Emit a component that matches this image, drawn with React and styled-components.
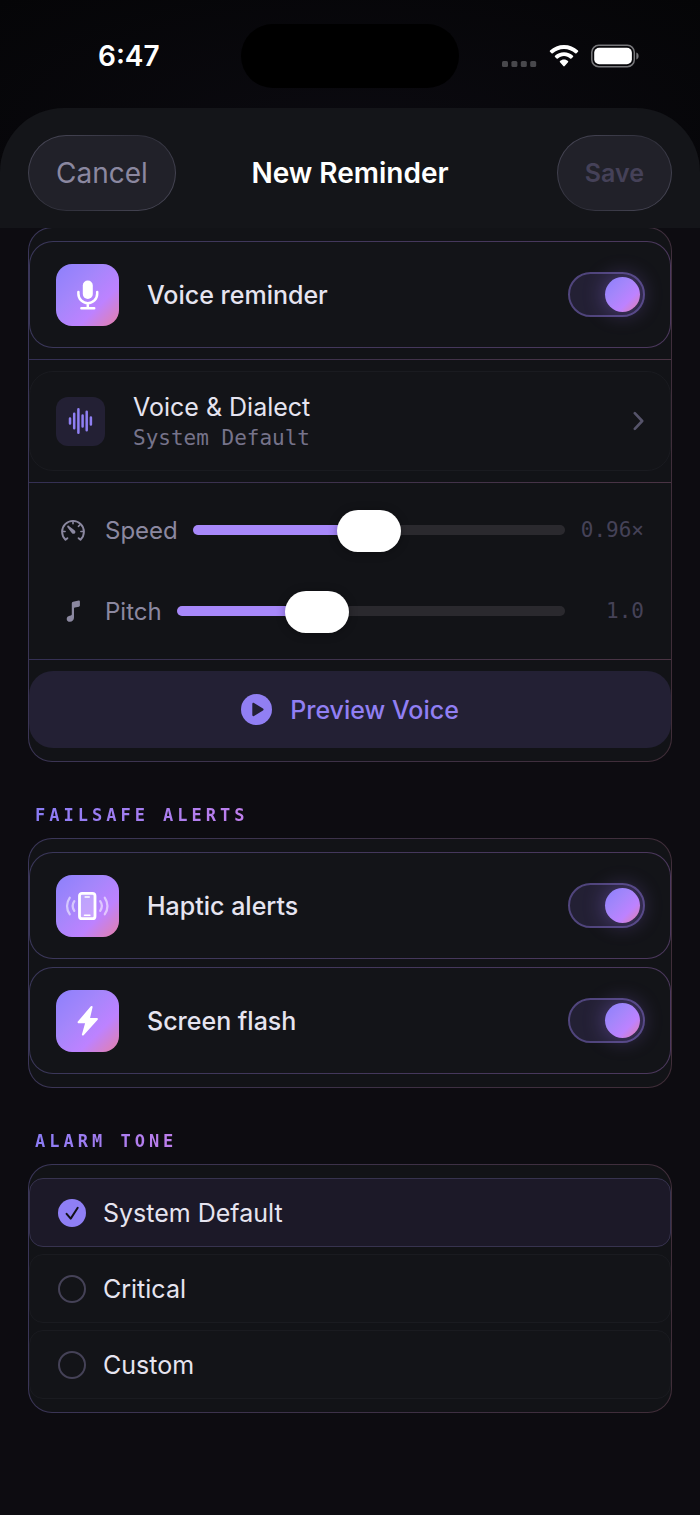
import { useState } from 'react'
import styled, { createGlobalStyle, css } from 'styled-components'

const GlobalStyle = createGlobalStyle`
  *, *::before, *::after {
    box-sizing: border-box;
  }

  body {
    margin: 0;
    background: #0d0c11;
    color: #e6e4f0;
    font-family: Inter, "Liberation Sans", sans-serif;
    -webkit-font-smoothing: antialiased;
  }

  button, input {
    font: inherit;
    color: inherit;
    margin: 0;
  }
`

const mono = '"DejaVu Sans Mono", monospace'
const accentGradient = 'linear-gradient(135deg, #8c80fb 0%, #a586fb 38%, #bd82ff 68%, #e57fa8 100%)'

const gradientBorder = (fill, from, to) => css`
  border: 1px solid transparent;
  background:
    linear-gradient(${fill}, ${fill}) padding-box,
    linear-gradient(100deg, ${from}, ${to}) border-box;
`

const Page = styled.div`
  min-height: 100vh;
  background: #0d0c11;
`

const Top = styled.div`
  position: relative;
  background: radial-gradient(ellipse at 50% 60%, #0b0a10, #050507);
`

const StatusBar = styled.div`
  display: grid;
  grid-template-columns: 1fr 218px 1fr;
  align-items: center;
  height: 108px;
  padding: 4px 61px 0;

  .island {
    height: 64px;
    border-radius: 32px;
    background: #000;
  }
`

const Clock = styled.span`
  padding-left: 37px;
  font-size: 28px;
  font-weight: 600;
  color: #fff;
`

const StatusIcons = styled.div`
  display: flex;
  align-items: center;
  justify-content: flex-end;
  gap: 12px;
`

const SheetHeader = styled.header`
  display: grid;
  grid-template-columns: 1fr auto 1fr;
  align-items: center;
  padding: 27px 28px 17px;
  border-radius: 64px 64px 0 0;
  background: #141519;

  h1 {
    margin: 0;
    font-size: 28px;
    font-weight: 600;
    color: #fff;
  }
`

const PillButton = styled.button`
  height: 76px;
  padding: 0 27px;
  border: 1px solid transparent;
  border-radius: 38px;
  background:
    linear-gradient(#212129, #212129) padding-box,
    linear-gradient(135deg, #4c4b5b, #2f2f3a 50%, #4c4b5b) border-box;
  font-size: 28px;
  color: #8b88a0;
  justify-self: start;

  &:disabled {
    justify-self: end;
    font-size: 25px;
    font-weight: 600;
    color: #454158;
  }
`

const Form = styled.main`
  margin-top: -1px;
  padding: 0 28px 60px;
`

const SectionTitle = styled.h2`
  width: fit-content;
  margin: 41px 0 11px 7px;
  font-family: ${mono};
  font-size: 17px;
  font-weight: 700;
  line-height: 24px;
  letter-spacing: 4px;
  background: linear-gradient(90deg, #8a7cf5, #c07fec);
  background-clip: text;
  color: transparent;
`

const Card = styled.section`
  display: flex;
  flex-direction: column;
  gap: ${props => props.$gap || 0}px;
  padding: 13px 0;
  border-radius: 24px;
  ${gradientBorder('#121317', '#3a3659', '#402d38')}
`

const Divider = styled.hr`
  width: 100%;
  height: 1px;
  margin: 11px 0;
  border: 0;
  background: linear-gradient(90deg, #343054, #4a3444);
`

const ToggleRow = styled.label`
  display: flex;
  align-items: center;
  gap: 28px;
  height: 107px;
  padding: 0 25px 0 26px;
  border-radius: 24px;
  font-size: 25px;
  font-weight: 500;
  ${gradientBorder('#131418', '#3a375a', '#4c385d')}

  span {
    flex: 1;
  }
`

const Tile = styled.div`
  display: grid;
  place-items: center;
  flex: none;
  width: ${props => (props.$small ? 49 : 63)}px;
  height: ${props => (props.$small ? 49 : 62)}px;
  border-radius: ${props => (props.$small ? 12 : 16)}px;
  background: ${props => (props.$small ? '#232034' : accentGradient)};
  color: ${props => (props.$small ? '#8f7ff2' : '#fff')};
`

const Switch = styled.input`
  appearance: none;
  flex: none;
  display: flex;
  align-items: center;
  width: 77px;
  height: 45px;
  padding: 0 3px;
  border: 2px solid #2c2a3c;
  border-radius: 23px;
  background: #232034;

  &::before {
    content: "";
    width: 35px;
    height: 35px;
    border-radius: 50%;
    background: #5a566e;
  }

  &:checked {
    justify-content: flex-end;
    border-color: #50457c;
  }

  &:checked::before {
    background: ${accentGradient};
    box-shadow: 0 0 22px rgba(160, 120, 255, 0.4);
  }
`

const LinkRow = styled.button`
  display: flex;
  align-items: center;
  gap: 28px;
  width: 100%;
  height: 100px;
  padding: 0 26px;
  border: 1px solid #1a1b20;
  border-radius: 24px;
  background: #131418;
  text-align: left;

  .text {
    display: flex;
    flex-direction: column;
    flex: 1;
    padding-top: 4px;
    font-size: 25px;
    line-height: 31px;
  }

  small {
    font-family: ${mono};
    font-size: 21px;
    line-height: 31px;
    color: #76738a;
  }
`

const Sliders = styled.div`
  display: flex;
  flex-direction: column;
  gap: 39px;
  padding: 15px 27px 16px;
`

const SliderRow = styled.label`
  display: flex;
  align-items: center;
  gap: 15px;
  height: 42px;
  font-size: 24px;
  color: #8b88a0;

  svg {
    flex: none;
  }

  output {
    min-width: 64px;
    font-family: ${mono};
    font-size: 21px;
    text-align: right;
    color: #454257;
  }
`

const Range = styled.input`
  appearance: none;
  flex: 1;
  min-width: 0;
  height: 42px;
  background: none;

  &::-webkit-slider-runnable-track {
    height: 10px;
    border-radius: 5px;
    background: linear-gradient(90deg, #a788fa var(--fill), #2a292e var(--fill));
  }

  &::-webkit-slider-thumb {
    appearance: none;
    width: 64px;
    height: 42px;
    margin-top: -15px;
    border-radius: 21px;
    background: #fff;
    box-shadow: 0 1px 10px rgba(0, 0, 0, 0.3);
  }
`

const PreviewButton = styled.button`
  display: flex;
  align-items: center;
  justify-content: center;
  gap: 18px;
  height: 77px;
  border: 0;
  border-radius: 24px;
  background: #232034;
  font-size: 25px;
  font-weight: 500;
  color: #917ff3;
`

const ToneRow = styled.label`
  display: flex;
  align-items: center;
  gap: 17px;
  height: 69px;
  padding: 0 28px;
  border: 1px solid ${props => (props.$active ? '#37334f' : '#1a1b20')};
  border-radius: 14px;
  background: ${props => (props.$active ? '#1c1928' : '#131418')};
  font-size: 25px;
`

const RadioMark = styled.span`
  display: grid;

  input, svg {
    grid-area: 1 / 1;
  }

  input {
    appearance: none;
    width: 28px;
    height: 28px;
    border: 2px solid #454257;
    border-radius: 50%;
  }

  input:checked {
    border: 0;
    background: #8f7ff5;
  }

  svg {
    pointer-events: none;
  }
`

function SignalDots() {
  return (
    <svg width="35" height="24" viewBox="0 0 35 24" fill="#48484c">
      <rect x="0" y="17" width="6" height="6" rx="1.5" />
      <rect x="9.4" y="17" width="6" height="6" rx="1.5" />
      <rect x="18.8" y="17" width="6" height="6" rx="1.5" />
      <rect x="28.2" y="17" width="6" height="6" rx="1.5" />
    </svg>
  )
}

function WifiIcon() {
  return (
    <svg width="30" height="24" viewBox="0 0 30 24" fill="#fff">
      <path d="M15 1C9.600 1 4.700 3 1 6.500c-.4.400-.4.900 0 1.300l1.500 1.500c.4.400.9.400 1.300 0C6.800 6.500 10.700 4.900 15 4.900s8.200 1.600 11.200 4.400c.4.400.9.400 1.300 0L29 7.800c.4-.4.400-.9 0-1.300C25.300 3 20.400 1 15 1z" />
      <path d="M15 8.200c-3.500 0-6.700 1.300-9 3.500-.4.400-.4.900 0 1.300l1.600 1.500c.4.400.9.400 1.300 0 1.600-1.500 3.700-2.400 6.100-2.400s4.500.9 6.100 2.400c.4.400.9.400 1.300 0L24 13c.4-.4.400-.9 0-1.300-2.300-2.200-5.500-3.500-9-3.500z" />
      <path d="M15 15.400c-1.600 0-3 .6-4 1.500-.4.400-.4.900 0 1.300l3.300 3.900c.4.400 1 .4 1.400 0L19 18.200c.4-.4.400-.9 0-1.300-1-.9-2.400-1.500-4-1.500z" />
    </svg>
  )
}

function BatteryIcon() {
  return (
    <svg width="48" height="24" viewBox="0 0 48 24">
      <rect x="0.800" y="1.300" width="42.500" height="21.400" rx="7" fill="none" stroke="#77777a" strokeWidth="1.500" />
      <rect x="3.200" y="3.700" width="37.700" height="16.600" rx="5" fill="#fff" />
      <path d="M45.300 8.500c1.500.5 2.300 1.900 2.300 3.500s-.8 3-2.300 3.500z" fill="#77777a" />
    </svg>
  )
}

function MicIcon() {
  return (
    <svg width="24" height="32" viewBox="0 0 24 32" fill="none" stroke="#fff" strokeWidth="2.500" strokeLinecap="round">
      <rect x="6.800" y="1.500" width="10" height="18.500" rx="5" fill="#fff" stroke="none" />
      <path d="M2.400 13v1.800a9.400 9.400 0 0 0 18.800 0V13M11.800 24.500v4.300M5.400 29.200h12.800" />
    </svg>
  )
}

function WaveformIcon() {
  return (
    <svg width="26" height="28" viewBox="0 0 26 28" fill="none" stroke="currentColor" strokeWidth="2.500" strokeLinecap="round">
      <path d="M2 11.500v5M6.200 6.700v14.600M10.400 2.200v23.600M14.600 8.500v11M18.700 4.700v18.600M22.900 10.500v7" />
    </svg>
  )
}

function ChevronIcon() {
  return (
    <svg width="11" height="20" viewBox="0 0 11 20" fill="none" stroke="#56546a" strokeWidth="2.600" strokeLinecap="round" strokeLinejoin="round">
      <path d="M1.800 2.200L9.200 10l-7.400 7.800" />
    </svg>
  )
}

function GaugeIcon() {
  return (
    <svg width="34" height="26" viewBox="0 0 34 26" fill="none" stroke="#8b88a0" strokeWidth="1.900" strokeLinecap="round" strokeLinejoin="round">
      <path d="M11.400 21.200l-1.900 1.500A10.900 10.900 0 1 1 24.500 22.700l-1.900-1.500" />
      <path d="M17 4v2.800M6.500 14.500h2.600M27.500 14.500h-2.600M24.300 7.500l-1.900 1.800" strokeWidth="1.600" />
      <path d="M11.400 8.900c.5-.5 1-.4 1.500 0l5.600 4.300c1.100.9 1.200 2.300.4 3.100s-2.300.8-3.100-.4l-4.400-5.600c-.4-.5-.4-1 0-1.400z" fill="#8b88a0" stroke="none" />
    </svg>
  )
}

function NoteIcon() {
  return (
    <svg width="34" height="24" viewBox="0 0 34 24" fill="#8b88a0">
      <path d="M15.800 4.600c0-1 .5-1.600 1.400-1.800l5.500-1.200c.7-.2 1.200.2 1.200.9v4c0 .6-.4 1-1 1.200l-4 .9c-.6.100-.9.400-.9 1v9c0 2.600-1.700 4.200-4.100 4.200-1.900 0-3.200-1.200-3.200-2.900s1.200-2.800 3-3.200l1.100-.3c.7-.1 1-.5 1-1.200z" />
    </svg>
  )
}

function HapticIcon() {
  return (
    <svg width="46" height="32" viewBox="0 0 46 32" fill="none" stroke="#fff" strokeLinecap="round">
      <rect x="14.500" y="3.300" width="15.500" height="25.400" rx="2.500" fill="#fff" fillOpacity="0.250" strokeWidth="2.800" />
      <path d="M20.200 7h4M19.500 25.300h5.400" strokeWidth="1.600" />
      <path d="M9.300 11.200a8.500 8.500 0 0 0 0 9.600M35.200 11.200a8.500 8.500 0 0 1 0 9.600M4.700 7.800a14 14 0 0 0 0 16.400M39.800 7.800a14 14 0 0 1 0 16.400" strokeWidth="2.300" opacity="0.550" />
    </svg>
  )
}

function BoltIcon() {
  return (
    <svg width="22" height="32" viewBox="0 0 22 32" fill="#fff" stroke="#fff" strokeWidth="2" strokeLinejoin="round">
      <path d="M14.600 2L1.600 17.200h7.800L5.900 29.600l14-15.600h-8.100z" />
    </svg>
  )
}

function PlayIcon() {
  return (
    <svg width="31" height="31" viewBox="0 0 31 31">
      <circle cx="15.500" cy="15.500" r="15.500" fill="#917ff3" />
      <path d="M11.300 9.900c0-1 .9-1.500 1.700-1l9 5.600c.8.500.8 1.500 0 2l-9 5.600c-.8.500-1.700 0-1.700-1z" fill="#232034" />
    </svg>
  )
}

function CheckIcon() {
  return (
    <svg width="28" height="28" viewBox="0 0 28 28" fill="none" stroke="#131219" strokeWidth="2" strokeLinecap="round" strokeLinejoin="round">
      <path d="M8.600 14.800l4.100 4.800 7-10.800" />
    </svg>
  )
}

function Toggle({ icon, label }) {
  return (
    <ToggleRow>
      <Tile>{icon}</Tile>
      <span>{label}</span>
      <Switch type="checkbox" role="switch" defaultChecked />
    </ToggleRow>
  )
}

const THUMB = 64

function Slider({ icon, label, min, max, step, initial, format }) {
  const [value, setValue] = useState(initial)
  const ratio = (value - min) / (max - min)
  const fill = `calc(${THUMB / 2}px + (100% - ${THUMB}px) * ${ratio})`

  return (
    <SliderRow>
      {icon}
      <span>{label}</span>
      <Range
        type="range"
        min={min}
        max={max}
        step={step}
        value={value}
        onChange={e => setValue(Number(e.target.value))}
        style={{ '--fill': fill }}
      />
      <output>{format(value)}</output>
    </SliderRow>
  )
}

const tones = ['System Default', 'Critical', 'Custom']

function App() {
  const [tone, setTone] = useState(tones[0])

  return (
    <>
      <GlobalStyle />
      <Page>
        <Top>
          <StatusBar>
            <Clock>6:47</Clock>
            <div className="island" />
            <StatusIcons>
              <SignalDots />
              <WifiIcon />
              <BatteryIcon />
            </StatusIcons>
          </StatusBar>
          <SheetHeader>
            <PillButton type="button">Cancel</PillButton>
            <h1>New Reminder</h1>
            <PillButton type="button" disabled>Save</PillButton>
          </SheetHeader>
        </Top>

        <Form>
          <Card>
            <Toggle icon={<MicIcon />} label="Voice reminder" />
            <Divider />
            <LinkRow type="button">
              <Tile $small><WaveformIcon /></Tile>
              <span className="text">
                Voice &amp; Dialect
                <small>System Default</small>
              </span>
              <ChevronIcon />
            </LinkRow>
            <Divider />
            <Sliders>
              <Slider
                icon={<GaugeIcon />}
                label="Speed"
                min={0.4}
                max={1.6}
                step={0.01}
                initial={0.96}
                format={v => `${v.toFixed(2)}×`}
              />
              <Slider
                icon={<NoteIcon />}
                label="Pitch"
                min={0.5}
                max={2}
                step={0.1}
                initial={1}
                format={v => v.toFixed(1)}
              />
            </Sliders>
            <Divider />
            <PreviewButton type="button">
              <PlayIcon />
              Preview Voice
            </PreviewButton>
          </Card>

          <SectionTitle>FAILSAFE ALERTS</SectionTitle>
          <Card $gap={8}>
            <Toggle icon={<HapticIcon />} label="Haptic alerts" />
            <Toggle icon={<BoltIcon />} label="Screen flash" />
          </Card>

          <SectionTitle>ALARM TONE</SectionTitle>
          <Card $gap={7}>
            {tones.map(name => (
              <ToneRow key={name} $active={tone === name}>
                <RadioMark>
                  <input
                    type="radio"
                    name="tone"
                    checked={tone === name}
                    onChange={() => setTone(name)}
                  />
                  {tone === name && <CheckIcon />}
                </RadioMark>
                {name}
              </ToneRow>
            ))}
          </Card>
        </Form>
      </Page>
    </>
  )
}

export default App
